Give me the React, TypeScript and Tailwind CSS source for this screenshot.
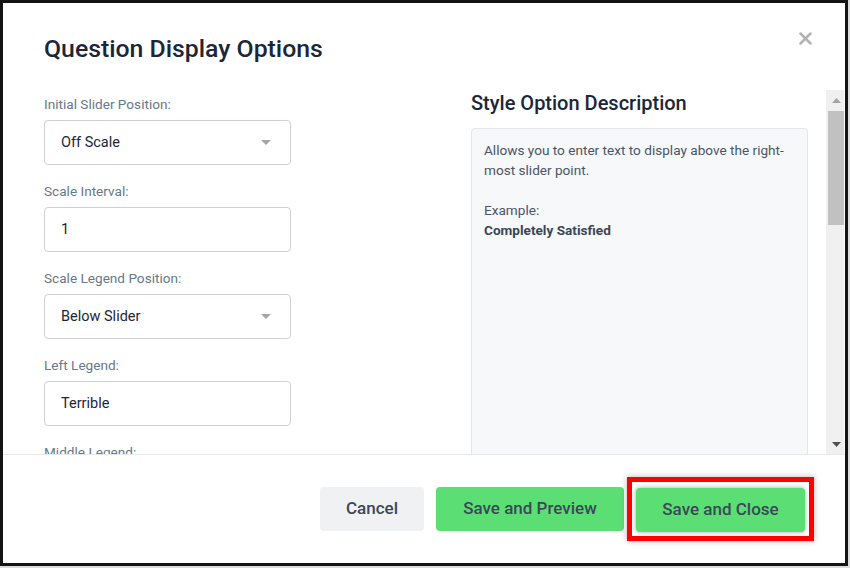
import React from "react";

type Field = {
  label: string;
  value: string;
  select?: boolean;
};

const fields: Field[] = [
  { label: "Initial Slider Position:", value: "Off Scale", select: true },
  { label: "Scale Interval:", value: "1" },
  { label: "Scale Legend Position:", value: "Below Slider", select: true },
  { label: "Left Legend:", value: "Terrible" },
  { label: "Middle Legend:", value: "" },
];

export default function App() {
  return (
    <div
      className="h-[568px] w-[850px] bg-[#dcdcdc]"
      style={{ fontFamily: "Roboto, 'Liberation Sans', sans-serif" }}
    >
      <div className="flex h-[566px] w-[848px] flex-col border-[3px] border-[#141414] bg-white">
        <header className="relative h-[87px] shrink-0 pl-[41px] pt-[31px]">
          <h1 className="text-[24.8px] font-medium leading-[30px] text-[#1c2638]">
            Question Display Options
          </h1>
          <button className="absolute right-[31px] top-[27px] p-[2px]" aria-label="Close">
            <svg width="13" height="13" viewBox="0 0 13 13">
              <path
                d="M1.5 1.5 L11.5 11.5 M11.5 1.5 L1.5 11.5"
                stroke="#b3b3b3"
                strokeWidth="2.5"
                strokeLinecap="round"
              />
            </svg>
          </button>
        </header>

        <div className="flex h-[364px] shrink-0">
          <div className="flex flex-1 overflow-hidden pl-[41px]">
            <div className="w-[247px] shrink-0 pt-[4px]">
              {fields.map((f) => (
                <FieldRow key={f.label} field={f} />
              ))}
            </div>
            <div className="ml-[180px] w-[337px] shrink-0">
              <h2 className="text-[20px] font-medium leading-[26px] text-[#1c2638]">
                Style Option Description
              </h2>
              <div className="mt-[12px] h-[400px] rounded border border-[#e3e6ea] bg-[#f7f8fa] px-[12px] pt-[11px] text-[13.6px] leading-[20px] text-[#4a5567]">
                <p>Allows you to enter text to display above the right-most slider point.</p>
                <p className="mt-[20px]">Example:</p>
                <p className="font-bold text-[#3b4657]">Completely Satisfied</p>
              </div>
            </div>
          </div>
          <Scrollbar />
          <div className="w-[1px]" />
        </div>

        <footer className="flex flex-1 items-center justify-end border-t border-[#e6e8eb] pr-[31px]">
          <button className="h-[44px] w-[104px] rounded bg-[#f0f1f3] text-[17px] font-medium text-[#3b4758]">
            Cancel
          </button>
          <button className="ml-[12px] h-[44px] w-[188px] rounded bg-[#5bdf74] text-[17px] font-medium text-[#3b4758]">
            Save and Preview
          </button>
          <div className="ml-[3px] border-[5px] border-[#ff0000] px-[4px] pb-[4px] pt-[6px] shadow-[0_0_6px_rgba(0,0,0,0.3)]">
            <button className="h-[44px] w-[169px] rounded bg-[#5bdf74] text-[17px] font-medium text-[#3b4758] shadow-[0_0_5px_rgba(0,0,0,0.35)]">
              Save and Close
            </button>
          </div>
        </footer>
      </div>
    </div>
  );
}

function FieldRow({ field }: { field: Field }) {
  return (
    <div className="mb-[16px]">
      <label className="block text-[13.6px] leading-[20px] text-[#66788a]">{field.label}</label>
      <div className="mt-[6px] flex h-[45px] items-center justify-between rounded border border-[#cdd1d6] bg-white pl-[16px] pr-[19px] text-[14.5px] text-[#1c2638]">
        <span>{field.value}</span>
        {field.select && (
          <svg width="10" height="5" viewBox="0 0 10 5">
            <path d="M0 0 L10 0 L5 5 Z" fill="#a3a7ad" />
          </svg>
        )}
      </div>
    </div>
  );
}

function Scrollbar() {
  return (
    <div className="flex w-[18px] shrink-0 flex-col bg-[#f0f0f0]">
      <div className="flex h-[21px] items-center justify-center pl-[2px]">
        <svg width="9" height="5" viewBox="0 0 9 5">
          <path d="M0 5 L9 5 L4.5 0 Z" fill="#a3a3a3" />
        </svg>
      </div>
      <div className="ml-[2px] h-[114px] bg-[#c1c1c1]" />
      <div className="flex-1" />
      <div className="flex h-[20px] items-center justify-center pl-[2px]">
        <svg width="9" height="5" viewBox="0 0 9 5">
          <path d="M0 0 L9 0 L4.5 5 Z" fill="#505050" />
        </svg>
      </div>
    </div>
  );
}
